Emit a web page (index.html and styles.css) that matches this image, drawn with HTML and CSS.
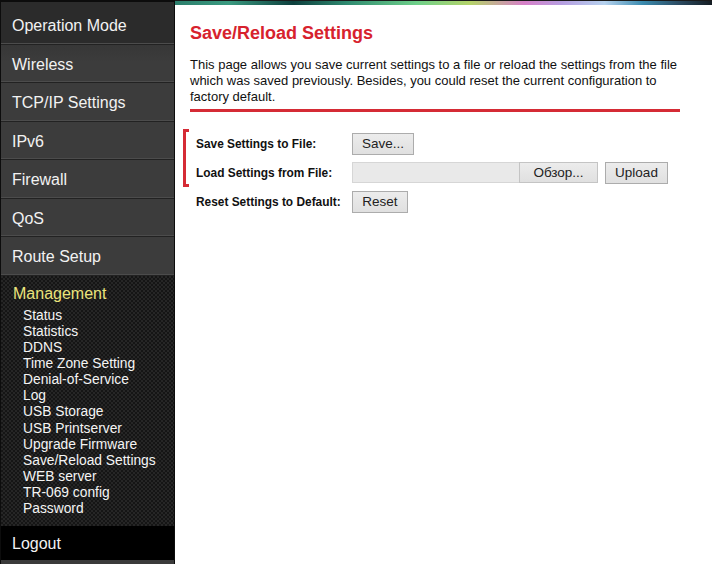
FILE: index.html
```html
<!DOCTYPE html>
<html lang="en">
<head>
    <meta charset="UTF-8">
    <title>Save/Reload Settings</title>
    <link rel="stylesheet" href="styles.css">
</head>
<body>
    <div class="page">
        <nav class="sidebar">
            <a class="menu-item" href="#">Operation Mode</a>
            <a class="menu-item" href="#">Wireless</a>
            <a class="menu-item" href="#">TCP/IP Settings</a>
            <a class="menu-item" href="#">IPv6</a>
            <a class="menu-item" href="#">Firewall</a>
            <a class="menu-item" href="#">QoS</a>
            <a class="menu-item" href="#">Route Setup</a>

            <div class="submenu">
                <div class="submenu-title">Management</div>
                <a href="#">Status</a>
                <a href="#">Statistics</a>
                <a href="#">DDNS</a>
                <a href="#">Time Zone Setting</a>
                <a href="#">Denial-of-Service</a>
                <a href="#">Log</a>
                <a href="#">USB Storage</a>
                <a href="#">USB Printserver</a>
                <a href="#">Upgrade Firmware</a>
                <a href="#">Save/Reload Settings</a>
                <a href="#">WEB server</a>
                <a href="#">TR-069 config</a>
                <a href="#">Password</a>
            </div>

            <a class="logout" href="#">Logout</a>
        </nav>

        <main class="main">
            <div class="top-strip"></div>
            <div class="content">
                <h1>Save/Reload Settings</h1>
                <p>This page allows you save current settings to a file or reload the settings from the file which was saved previously. Besides, you could reset the current configuration to factory default.</p>
                <hr class="rule">

                <!-- formulaire de sauvegarde -->
                <div class="settings">
                    <div class="group">
                        <div class="row">
                            <label>Save Settings to File:</label>
                            <button class="btn btn-save">Save...</button>
                        </div>
                        <div class="row">
                            <label>Load Settings from File:</label>
                            <div class="file-field">
                                <span class="file-path"></span>
                                <button class="btn btn-browse">Обзор...</button>
                            </div>
                            <button class="btn btn-upload">Upload</button>
                        </div>
                    </div>
                    <div class="row">
                        <label>Reset Settings to Default:</label>
                        <button class="btn btn-reset">Reset</button>
                    </div>
                </div>
            </div>
        </main>
    </div>
</body>
</html>
```

FILE: styles.css
```css
body {
    margin: 0;
    padding: 0;
    font-family: "Liberation Sans", Arial, sans-serif;
    background-color: #fff;
}

.page {
    display: flex;
    width: 712px;
    height: 564px;
    overflow: hidden;
}

/* menu de gauche */
.sidebar {
    width: 173px;
    flex: none;
    display: flex;
    flex-direction: column;
    border-top: 2px solid #0c0c0c;
    border-left: 1px solid #0c0c0c;
    border-right: 1px solid #0c0c0c;
    background: linear-gradient(#2a2a2a, #3c3c3c 60px, #3c3c3c);
}

.sidebar > * {
    flex-shrink: 0;
}

.menu-item {
    display: flex;
    align-items: center;
    box-sizing: border-box;
    height: 38.5px;
    padding: 3px 0 0 11px;
    color: #f2f2f2;
    font-size: 16px;
    text-decoration: none;
    border-bottom: 1px solid #222;
    box-shadow: inset 0 -1px 0 #4c4c4c;
}

.menu-item:first-child {
    height: 42.5px;
    padding-top: 7px;
    background-color: #2b2b2b;
}

.submenu {
    display: flex;
    flex-direction: column;
    padding: 8.5px 0 9px 0;
    background-color: #1c1c1c;
    background-image: repeating-conic-gradient(#151515 0 25%, #262626 0 50%);
    background-size: 4px 4px;
}

.submenu-title {
    color: #ebe47c;
    font-size: 16px;
    line-height: 20px;
    padding-left: 12px;
    margin-bottom: 4px;
}

.submenu a {
    color: #f4f4f4;
    font-size: 13.8px;
    line-height: 16.08px;
    padding-left: 22px;
    text-decoration: none;
}

.logout {
    display: flex;
    align-items: center;
    box-sizing: border-box;
    height: 38px;
    padding: 2px 0 0 11px;
    background-color: #000;
    color: #f2f2f2;
    font-size: 16px;
    text-decoration: none;
    border-bottom: 4px solid #3a3a3a;
}

/* partie principale */
.main {
    flex: 1;
    display: flex;
    flex-direction: column;
}

.top-strip {
    height: 4px;
    border-top: 1px solid #1a1a1a;
    background: linear-gradient(to right, #2c7e6c, #3a9a80 10%, #0d3f3d 22%, #2f8a70 32%, #6fd08a 45%, #b5d36a 55%, #d680c8 65%, #b69ee0 72%, #b6d2ee 80%, #3c8cb0 87%, #2b4a60 94%, #141c22);
}

.content {
    width: 490px;
    padding: 0 32px 0 15px;
}

.content h1 {
    margin: 18px 0 14px 0;
    font-size: 18px;
    line-height: 20px;
    color: #d7222d;
}

.content p {
    margin: 0;
    font-size: 13px;
    line-height: 16px;
    color: #111;
}

.rule {
    margin: 4px 0 0 0;
    height: 3px;
    border: none;
    background-color: #d52b35;
}

.settings {
    margin: 17px 0 0 -7px;
}

.group {
    position: relative;
}

.group::before {
    content: "";
    position: absolute;
    left: 0;
    top: 0;
    width: 6px;
    height: 100%;
    border: 3px solid #d52b35;
    border-right: none;
    box-sizing: border-box;
}

.row {
    display: flex;
    align-items: center;
    height: 29px;
    padding-left: 13px;
}

.row label {
    width: 156px;
    font-size: 11.9px;
    font-weight: bold;
    color: #111;
}

.btn {
    height: 22px;
    padding: 0;
    font-family: "Liberation Sans", Arial, sans-serif;
    font-size: 13.5px;
    color: #222;
    background: linear-gradient(#ececec, #e0e0e0);
    border: 1px solid #acacac;
    cursor: pointer;
}

.btn-save {
    width: 62px;
}

.btn-reset {
    width: 56px;
}

.btn-upload {
    width: 63px;
    margin-left: 7px;
}

.file-field {
    display: flex;
}

.file-path {
    width: 166px;
    height: 19px;
    background-color: #e9e9e9;
    border: 1px solid #d6d6d6;
    border-right: none;
}

.btn-browse {
    width: 79px;
    height: 21px;
    border-color: #c4c4c4;
}
```
